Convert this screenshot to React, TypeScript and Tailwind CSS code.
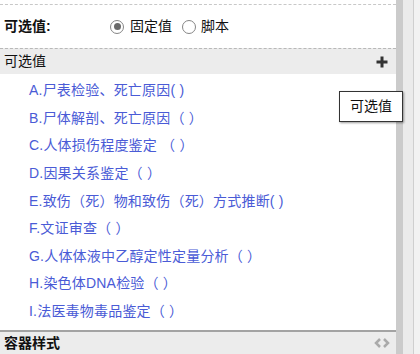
import React from "react";

const items = [
  "A.尸表检验、死亡原因( )",
  "B.尸体解剖、死亡原因（ ）",
  "C.人体损伤程度鉴定 （ ）",
  "D.因果关系鉴定（ ）",
  "E.致伤（死）物和致伤（死）方式推断( )",
  "F.文证审查（ ）",
  "G.人体体液中乙醇定性定量分析（ ）",
  "H.染色体DNA检验（ ）",
  "I.法医毒物毒品鉴定（ ）",
];

function Radio({ checked }: { checked?: boolean }) {
  return (
    <span className="w-[14px] h-[14px] rounded-full border-[1.5px] border-[#858585] bg-white flex items-center justify-center shrink-0">
      {checked && <span className="w-[7px] h-[7px] rounded-full bg-[#6a6a6a]" />}
    </span>
  );
}

export default function App() {
  return (
    <div
      className="relative w-[420px] h-[354px] overflow-hidden bg-white flex text-[14px] text-[#111]"
      style={{ fontFamily: '"Liberation Sans", "Noto Sans CJK SC", sans-serif' }}
    >
      <div className="w-[396px] h-full flex flex-col">
        <div className="h-[4px]" />
        <div className="border-t border-dashed border-[#c8c8c8] h-[44px] flex items-center pl-[4px]">
          <span className="font-bold w-[106px]">可选值:</span>
          <Radio checked />
          <span className="ml-[6px]">固定值</span>
          <span className="ml-[10px]" />
          <Radio />
          <span className="ml-[5px]">脚本</span>
        </div>
        <div className="border-t border-dashed border-[#b8b8b8] h-[26px] bg-[#ececec] flex items-center justify-between pl-[4px] pr-[8px]">
          <span>可选值</span>
          <svg width="12" height="12" viewBox="0 0 12 12">
            <rect x="4.5" y="0.5" width="3" height="11" fill="#333" />
            <rect x="0.5" y="4.5" width="11" height="3" fill="#333" />
          </svg>
        </div>
        <div className="pt-[3px] pl-[29px] flex flex-col text-[#4a5bd6] tracking-[0.2px]">
          {items.map((t) => (
            <div key={t} className="h-[27.6px] flex items-center whitespace-nowrap">
              {t}
            </div>
          ))}
        </div>
        <div className="flex-1" />
        <div className="border-t-2 border-[#a3a3a3] h-[24px] bg-[#ececec] flex items-center justify-between pl-[4px] pr-[6px]">
          <span className="font-bold">容器样式</span>
          <svg width="16" height="10" viewBox="0 0 16 10">
            <path d="M6 1 L2 5 L6 9" stroke="#aaa" strokeWidth="2.5" fill="none" />
            <path d="M10 1 L14 5 L10 9" stroke="#aaa" strokeWidth="2.5" fill="none" />
          </svg>
        </div>
      </div>
      <div className="w-[7px] h-full bg-[#cbcbcb]" />
      <div className="w-[10px] h-full bg-[#ebebeb]" />
      <div className="w-[1px] h-full bg-[#cfcfcf]" />
      <div className="flex-1 h-full bg-[#f2f2f2]" />

      <div className="absolute left-[339px] top-[91px] w-[64px] h-[31px] bg-white border border-[#333] shadow-[1px_1px_2px_rgba(0,0,0,0.4)] flex items-center justify-center">
        可选值
      </div>
    </div>
  );
}
